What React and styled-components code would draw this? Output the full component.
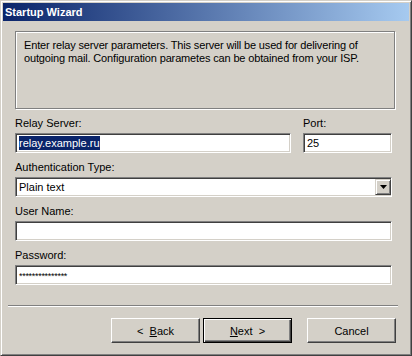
import React from "react";
import styled, { createGlobalStyle } from "styled-components";

const Global = createGlobalStyle`
  html, body { margin: 0; padding: 0; background: #d4d0c8; }
  * { box-sizing: border-box; }
`;

const Window = styled.div`
  width: 412px;
  height: 356px;
  background: #d4d0c8;
  border-style: solid;
  border-width: 1px;
  border-color: #d4d0c8 #404040 #404040 #d4d0c8;
  box-shadow: inset 1px 1px 0 #ffffff, inset -1px -1px 0 #808080;
  padding: 2px;
  display: flex;
  flex-direction: column;
  font-family: "Liberation Sans", Arial, sans-serif;
  font-size: 11px;
  color: #000;
`;

const TitleBar = styled.div`
  height: 18px;
  background: linear-gradient(to right, #0a246a, #a6caf0);
  color: #fff;
  font-weight: bold;
  font-size: 11px;
  line-height: 18px;
  padding-left: 2px;
  flex: none;
`;

const Body = styled.div`
  flex: 1;
  display: flex;
  flex-direction: column;
  padding: 10px 14px 0 12px;
`;

const InfoBox = styled.div`
  height: 78px;
  border: 1px solid #808080;
  box-shadow: inset 1px 1px 0 #fff, 1px 1px 0 #fff;
  padding: 7px 8px;
  line-height: 13px;
  letter-spacing: -0.15px;
`;

const Fields = styled.div`
  display: flex;
  flex-direction: column;
  gap: 8px;
  padding-right: 3px;
  margin-top: 8px;
`;

const Row = styled.div`
  display: flex;
  gap: 12px;
`;

const Field = styled.div`
  display: flex;
  flex-direction: column;
  flex: ${(p) => (p.$width ? "none" : "1")};
  width: ${(p) => (p.$width ? `${p.$width}px` : "auto")};
`;

const Label = styled.div`
  line-height: 13px;
  height: 13px;
  margin-bottom: 3px;
  white-space: nowrap;
`;

const Sunken = styled.div`
  height: 20px;
  background: #fff;
  border-style: solid;
  border-width: 1px;
  border-color: #808080 #fff #fff #808080;
  box-shadow: inset 1px 1px 0 #404040, inset -1px -1px 0 #d4d0c8;
  padding: 2px 2px 2px 3px;
  display: flex;
  align-items: center;
  line-height: 14px;
  white-space: nowrap;
  overflow: hidden;
`;

const Selected = styled.span`
  background: #0a246a;
  color: #fff;
  line-height: 14px;
`;

const Dots = styled.span`
  font-size: 9px;
  letter-spacing: -0.3px;
  padding-top: 1px;
`;

const SelectText = styled.span`
  flex: 1;
`;

const DropButton = styled.div`
  width: 16px;
  height: 16px;
  margin-right: -2px;
  background: #d4d0c8;
  border-style: solid;
  border-width: 1px;
  border-color: #d4d0c8 #404040 #404040 #d4d0c8;
  box-shadow: inset 1px 1px 0 #fff, inset -1px -1px 0 #808080;
  display: flex;
  align-items: center;
  justify-content: center;
`;

const Separator = styled.div`
  margin: 20px -3px 0 -7px;
  height: 2px;
  border-top: 1px solid #808080;
  border-bottom: 1px solid #fff;
`;

const Footer = styled.div`
  display: flex;
  justify-content: flex-end;
  padding-top: 11px;
  margin-right: -1px;
`;

const Button = styled.button`
  width: 89px;
  height: 25px;
  margin-left: ${(p) => p.$gap}px;
  font-family: "Liberation Sans", Arial, sans-serif;
  font-size: 11px;
  color: #000;
  background: #d4d0c8;
  border-style: solid;
  border-width: 1px;
  border-color: ${(p) =>
    p.$default ? "#000" : "#fff #404040 #404040 #fff"};
  box-shadow: ${(p) =>
    p.$default
      ? "inset 1px 1px 0 #fff, inset -1px -1px 0 #404040, inset -2px -2px 0 #808080"
      : "inset -1px -1px 0 #808080"};
  padding: 0;
  display: flex;
  align-items: center;
  justify-content: center;
`;

const U = styled.span`
  text-decoration: underline;
`;

const Arrow = () => (
  <svg width="7" height="4" viewBox="0 0 7 4">
    <path d="M0 0h7L3.5 4z" fill="#000" />
  </svg>
);

export default function App() {
  return (
    <>
      <Global />
      <Window>
        <TitleBar>Startup Wizard</TitleBar>
        <Body>
          <InfoBox>
            Enter relay server parameters. This server will be used for delivering of
            <br />
            outgoing mail. Configuration parametes can be obtained from your ISP.
          </InfoBox>
          <Fields>
            <Row>
              <Field>
                <Label>Relay Server:</Label>
                <Sunken>
                  <Selected>relay.example.ru</Selected>
                </Sunken>
              </Field>
              <Field $width={89}>
                <Label>Port:</Label>
                <Sunken>25</Sunken>
              </Field>
            </Row>
            <Field>
              <Label>Authentication Type:</Label>
              <Sunken>
                <SelectText>Plain text</SelectText>
                <DropButton>
                  <Arrow />
                </DropButton>
              </Sunken>
            </Field>
            <Field>
              <Label>User Name:</Label>
              <Sunken />
            </Field>
            <Field>
              <Label>Password:</Label>
              <Sunken>
                <Dots>***************</Dots>
              </Sunken>
            </Field>
          </Fields>
          <Separator />
          <Footer>
            <Button $gap={0}>
              &lt;&nbsp;&nbsp;<U>B</U>ack
            </Button>
            <Button $gap={3} $default>
              <U>N</U>ext&nbsp;&nbsp;&gt;
            </Button>
            <Button $gap={15}>Cancel</Button>
          </Footer>
        </Body>
      </Window>
    </>
  );
}
